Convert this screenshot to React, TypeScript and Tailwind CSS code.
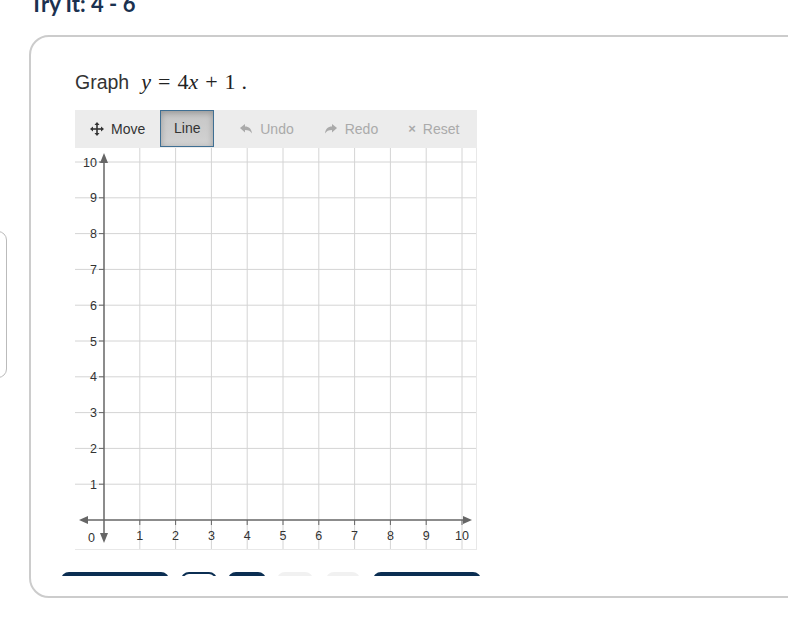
import React from "react";

const U = 35.8;
const OX = 29;
const OY = 372;

function Graph() {
  const lines = [];
  for (let k = 1; k <= 10; k++) {
    const x = OX + k * U;
    const y = OY - k * U;
    lines.push(<line key={"v" + k} x1={x} y1={0} x2={x} y2={402} stroke="#d4d4d4" strokeWidth={1} />);
    lines.push(<line key={"h" + k} x1={0} y1={y} x2={402} y2={y} stroke="#d4d4d4" strokeWidth={1} />);
  }
  const labels = [];
  for (let k = 1; k <= 10; k++) {
    const x = OX + k * U;
    const y = OY - k * U;
    labels.push(
      <text key={"xl" + k} x={x} y={OY + 20} textAnchor="middle" fontSize={12.5} fill="#333" fontFamily="'Liberation Sans', Arial, sans-serif">
        {k}
      </text>
    );
    labels.push(
      <text key={"yl" + k} x={OX - 7} y={y + 4.5} textAnchor="end" fontSize={12.5} fill="#333" fontFamily="'Liberation Sans', Arial, sans-serif">
        {k}
      </text>
    );
    labels.push(<line key={"yt" + k} x1={OX - 5} y1={y} x2={OX} y2={y} stroke="#666" strokeWidth={1} />);
    labels.push(<line key={"xt" + k} x1={x} y1={OY} x2={x} y2={OY + 5} stroke="#666" strokeWidth={1} />);
  }
  return (
    <svg width={402} height={402} className="block border-r border-b border-[#e8e8e8]">
      {lines}
      <line x1={10} y1={OY} x2={392} y2={OY} stroke="#666" strokeWidth={1.5} />
      <line x1={OX} y1={12} x2={OX} y2={388} stroke="#666" strokeWidth={1.5} />
      <polygon points={`${OX - 4},15 ${OX + 4},15 ${OX},5`} fill="#666" />
      <polygon points={`${OX - 4},385 ${OX + 4},385 ${OX},395`} fill="#666" />
      <polygon points={`13,${OY - 4} 13,${OY + 4} 4,${OY}`} fill="#666" />
      <polygon points={`388,${OY - 4} 388,${OY + 4} 397,${OY}`} fill="#666" />
      {labels}
      <text x={OX - 9} y={OY + 22} textAnchor="end" fontSize={12.5} fill="#333" fontFamily="'Liberation Sans', Arial, sans-serif">
        0
      </text>
    </svg>
  );
}

function MoveIcon() {
  return (
    <svg width={14} height={14} viewBox="0 0 14 14" fill="#333">
      <rect x={6.2} y={2} width={1.6} height={10} />
      <rect x={2} y={6.2} width={10} height={1.6} />
      <polygon points="7,0 4.5,3 9.5,3" />
      <polygon points="7,14 4.5,11 9.5,11" />
      <polygon points="0,7 3,4.5 3,9.5" />
      <polygon points="14,7 11,4.5 11,9.5" />
    </svg>
  );
}

function UndoIcon({ flip }: { flip?: boolean }) {
  return (
    <svg width={12} height={11} viewBox="0 0 12 11" fill="#aaa" style={flip ? { transform: "scaleX(-1)" } : undefined}>
      <path d="M0 4 L5 0 L5 2.6 C9 2.6 11.5 5 12 9.5 C10.5 7 8.5 6 5 6 L5 8.5 Z" />
    </svg>
  );
}

export default function App() {
  return (
    <div className="relative w-[788px] h-[636px] overflow-hidden bg-white" style={{ fontFamily: "'Liberation Sans', Arial, sans-serif" }}>
      <div className="pl-[30px] -mt-[7px] text-[22px] leading-[22px] font-bold text-[#1b3150]" style={{ fontFamily: "Lato, 'Open Sans', sans-serif" }}>
        Try It: 4 - 6
      </div>
      <div className="absolute left-[-12px] top-[231px] w-[19px] h-[147px] border border-[#bbb] rounded-[9px]" />
      <div className="ml-[29px] mt-[20px] w-[800px] h-[563px] border-2 border-[#cccccc] rounded-[20px] pl-[30px] pt-[33px]">
        <div className="ml-[14px]">
          <div className="flex items-baseline h-[24px] text-[19.5px] leading-[24px] text-[#333]">
            <span>Graph</span>
            <span className="ml-[12px] text-[22px] text-[#222]" style={{ fontFamily: "'Liberation Serif', 'Times New Roman', serif" }}>
              <i>y</i>
              <span className="mx-[7px]">=</span>
              <span>4</span>
              <i>x</i>
              <span className="mx-[7px]">+</span>
              <span>1</span>
              <span className="ml-[6px]">.</span>
            </span>
          </div>
          <div className="mt-[16px] w-[402px] h-[38px] bg-[#ececec] flex items-center text-[14px]">
            <div className="flex items-center ml-[15px] text-[#333]">
              <MoveIcon />
              <span className="ml-[7px]">Move</span>
            </div>
            <div className="ml-[15px] self-start w-[54px] h-[37px] border border-[#3f6f93] flex items-center justify-center text-[#333] bg-gradient-to-b from-[#c6c6c6] to-[#d2d2d2] shadow-[inset_0_2px_6px_rgba(0,0,0,0.25)]">
              Line
            </div>
            <div className="flex items-center ml-[26px] text-[#aaa]">
              <UndoIcon />
              <span className="ml-[8px]">Undo</span>
            </div>
            <div className="flex items-center ml-[31px] text-[#aaa]">
              <UndoIcon flip />
              <span className="ml-[8px]">Redo</span>
            </div>
            <div className="flex items-center ml-[30px] text-[#aaa]">
              <span className="text-[13px] font-bold">×</span>
              <span className="ml-[7px]">Reset</span>
            </div>
          </div>
          <Graph />
        </div>
        <div className="mt-[22px] h-[4px] overflow-hidden flex items-start">
          <div className="w-[108px] h-[40px] rounded-[8px] bg-[#0b2e52]" />
          <div className="ml-[12px] w-[36px] h-[40px] rounded-[8px] border-2 border-[#0b2e52] bg-white" />
          <div className="ml-[11px] w-[38px] h-[40px] rounded-[8px] bg-[#0b2e52]" />
          <div className="ml-[11px] w-[36px] h-[40px] rounded-[8px] bg-[#f1f1f1]" />
          <div className="ml-[13px] w-[34px] h-[40px] rounded-[8px] bg-[#f1f1f1]" />
          <div className="ml-[13px] w-[108px] h-[40px] rounded-[8px] bg-[#0b2e52]" />
        </div>
      </div>
    </div>
  );
}
